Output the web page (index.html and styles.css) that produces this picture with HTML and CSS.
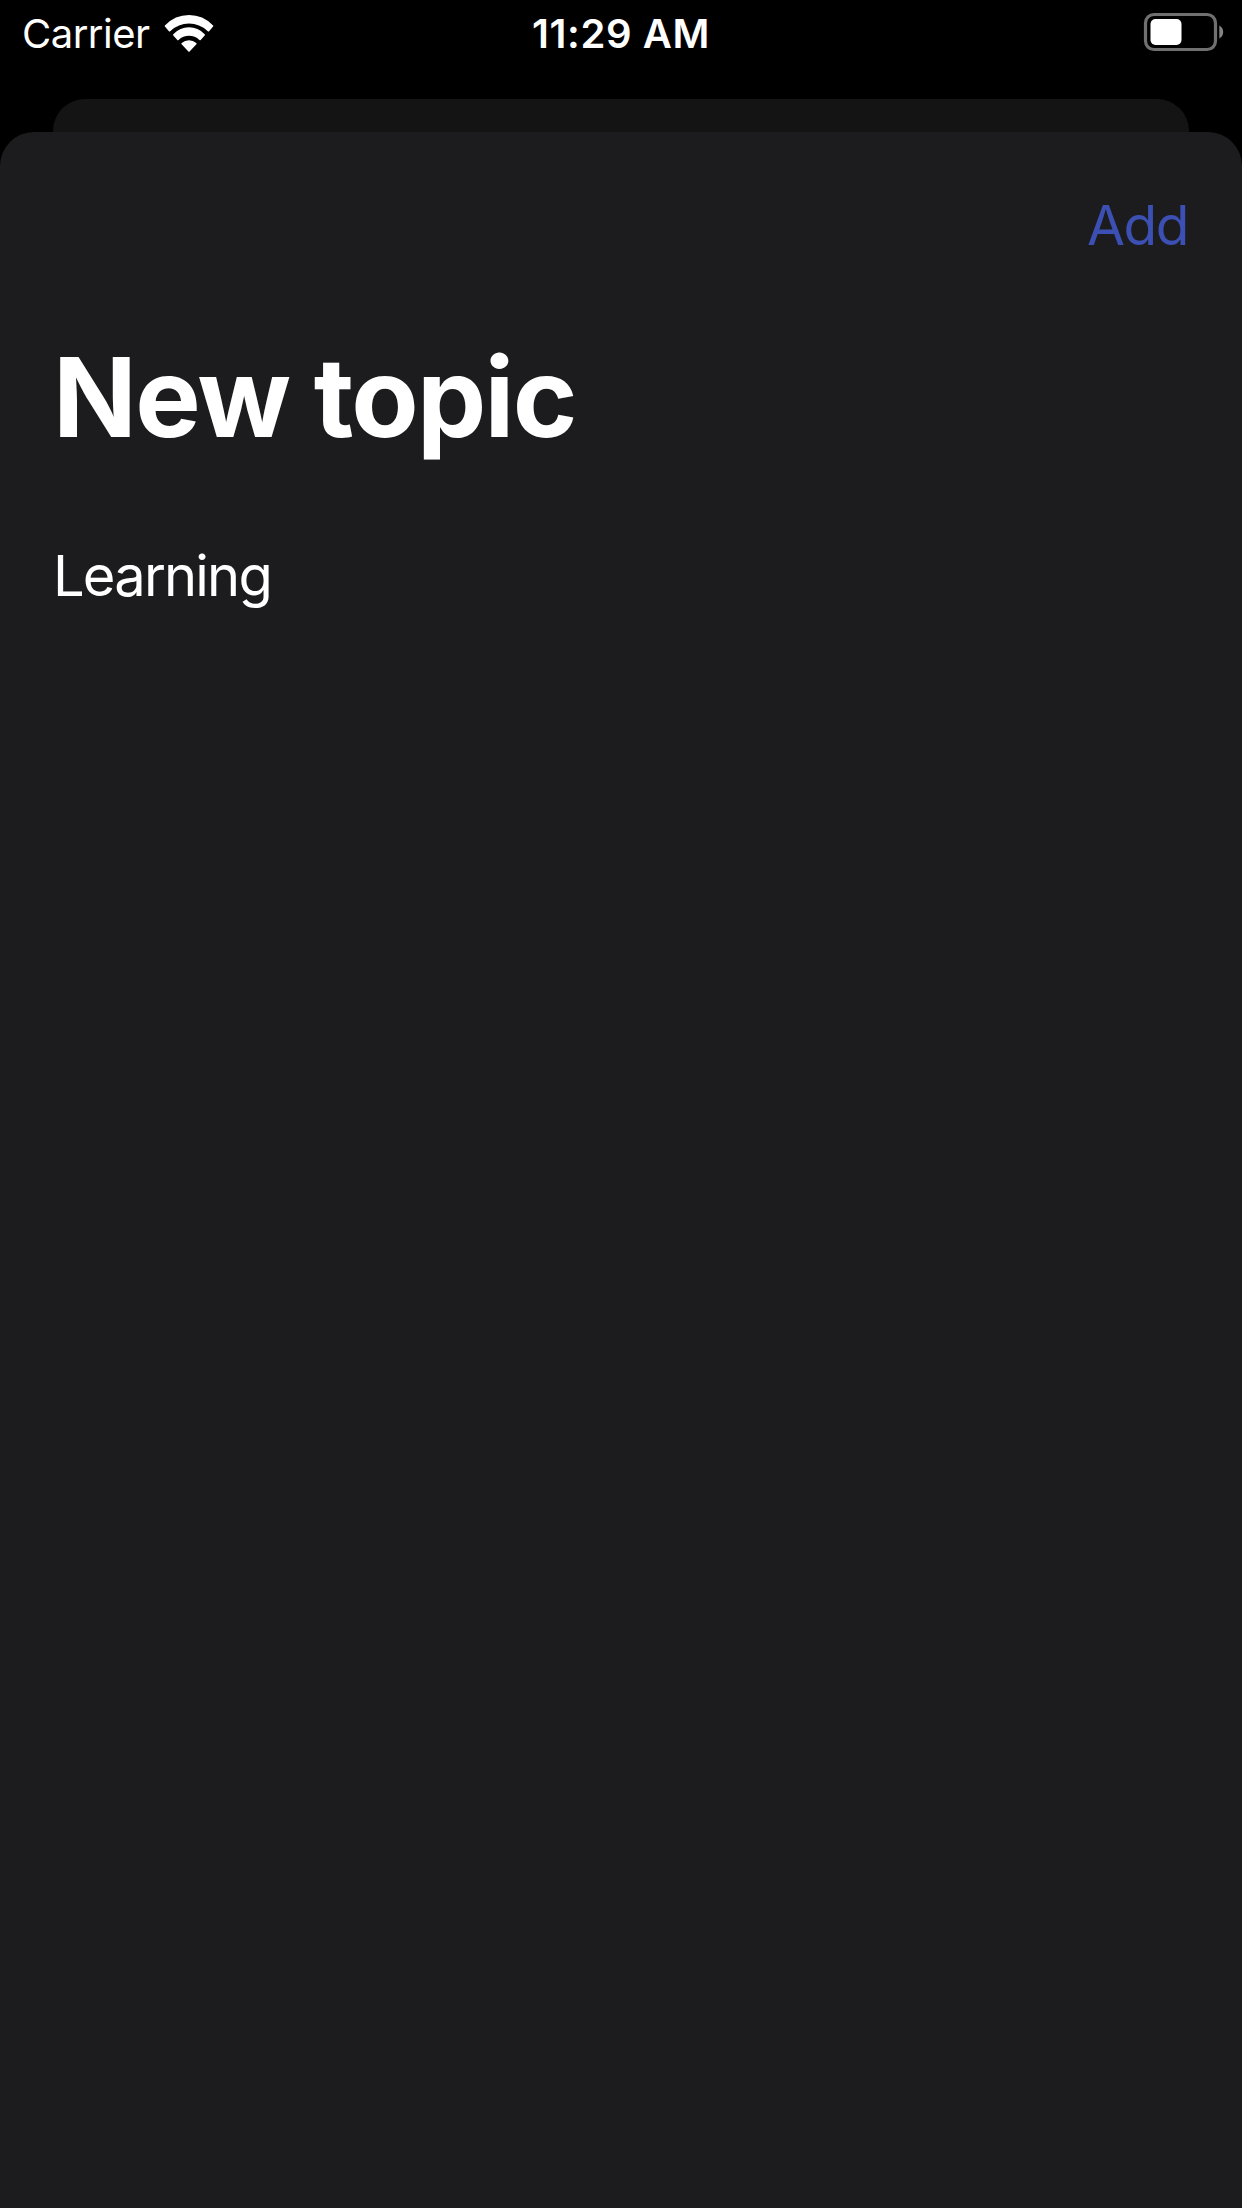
FILE: index.html
```html
<!DOCTYPE html>
<html lang="en">
<head>
<meta charset="utf-8">
<title>New topic</title>
<link rel="stylesheet" href="styles.css">
</head>
<body>
<div class="screen">
  <header class="status">
    <div class="network">
      <span class="carrier">Carrier</span>
      <svg class="wifi" width="50" height="38" viewBox="0 0 50 38" fill="#fff">
        <path d="M25 0Q39 0 49.1 10.4Q49.6 11 49.1 11.6L45.1 16.2Q44.5 16.8 43.8 16.2Q35.5 8.6 25 8.6T6.200 16.200Q5.500 16.800 4.900 16.200L.9 11.600Q.4 11 .9 10.400Q11 0 25 0Z"/>
        <path d="M25 12.300Q34 12.300 40.700 19.200Q41.300 19.800 40.700 20.400L36.700 24.900Q36.100 25.500 35.400 24.900Q31 20.700 25 20.700T14.600 24.900Q13.900 25.500 13.300 24.900L9.300 20.400Q8.700 19.800 9.300 19.200Q16 12.300 25 12.300Z"/>
        <path d="M25 25.200Q29.100 25.200 32.300 28Q33 28.600 32.400 29.200L25.600 36.500Q25 37.100 24.400 36.500L17.600 29.200Q17 28.600 17.700 28Q20.900 25.200 25 25.200Z"/>
      </svg>
    </div>
    <span class="time">11:29 AM</span>
    <svg class="battery" width="82" height="40" viewBox="0 0 82 40">
      <rect x="2.500" y="2.500" width="70" height="35" rx="8.500" fill="none" stroke="#707070" stroke-width="3.200"/>
      <rect x="7.500" y="7" width="31" height="26" rx="5" fill="#fff"/>
      <path d="M76.300 13.500Q80.200 15.500 80.200 20T76.300 26.500Z" fill="#848484"/>
    </svg>
  </header>
  <div class="peek"></div>
  <main class="sheet">
    <button class="add">Add</button>
    <h1 class="title">New topic</h1>
    <p class="entry">Learning</p>
  </main>
</div>
</body>
</html>
```
FILE: styles.css
```css
body {
  margin: 0;
  background: #000;
  color: #fff;
  font-family: Inter, "Liberation Sans", sans-serif;
}
.screen {
  height: 2208px;
  display: flex;
  flex-direction: column;
  overflow: hidden;
}
.status {
  height: 68px;
  flex: none;
  display: grid;
  grid-template-columns: 1fr auto 1fr;
  padding: 0 17px;
  font-size: 40px;
  line-height: 68px;
}
.network {
  display: flex;
  gap: 14px;
  padding-left: 5px;
}
.carrier {
  letter-spacing: -0.5px;
}
.wifi {
  margin-top: 15px;
}
.time {
  font-weight: 600;
  letter-spacing: 0.6px;
}
.battery {
  justify-self: end;
  margin-top: 12px;
}
.peek {
  height: 33px;
  flex: none;
  margin: 31px 53px 0;
  border-radius: 32px 32px 0 0;
  background: #141414;
}
.sheet {
  flex: 1;
  display: flex;
  flex-direction: column;
  padding: 59px 54px 0 53px;
  border-radius: 34px 34px 0 0;
  background: #1c1c1e;
}
.add {
  align-self: flex-end;
  padding: 0;
  border: 0;
  background: none;
  color: #3b50b2;
  font: 400 55px/68px Inter, "Liberation Sans", sans-serif;
  letter-spacing: -1.4px;
}
.title {
  margin: 72px 0 0;
  font-size: 110px;
  font-weight: 700;
  letter-spacing: -1.7px;
  line-height: 132px;
}
.entry {
  margin: 79px 0 0;
  font-size: 56px;
  letter-spacing: -1.8px;
  line-height: 68px;
}
```
